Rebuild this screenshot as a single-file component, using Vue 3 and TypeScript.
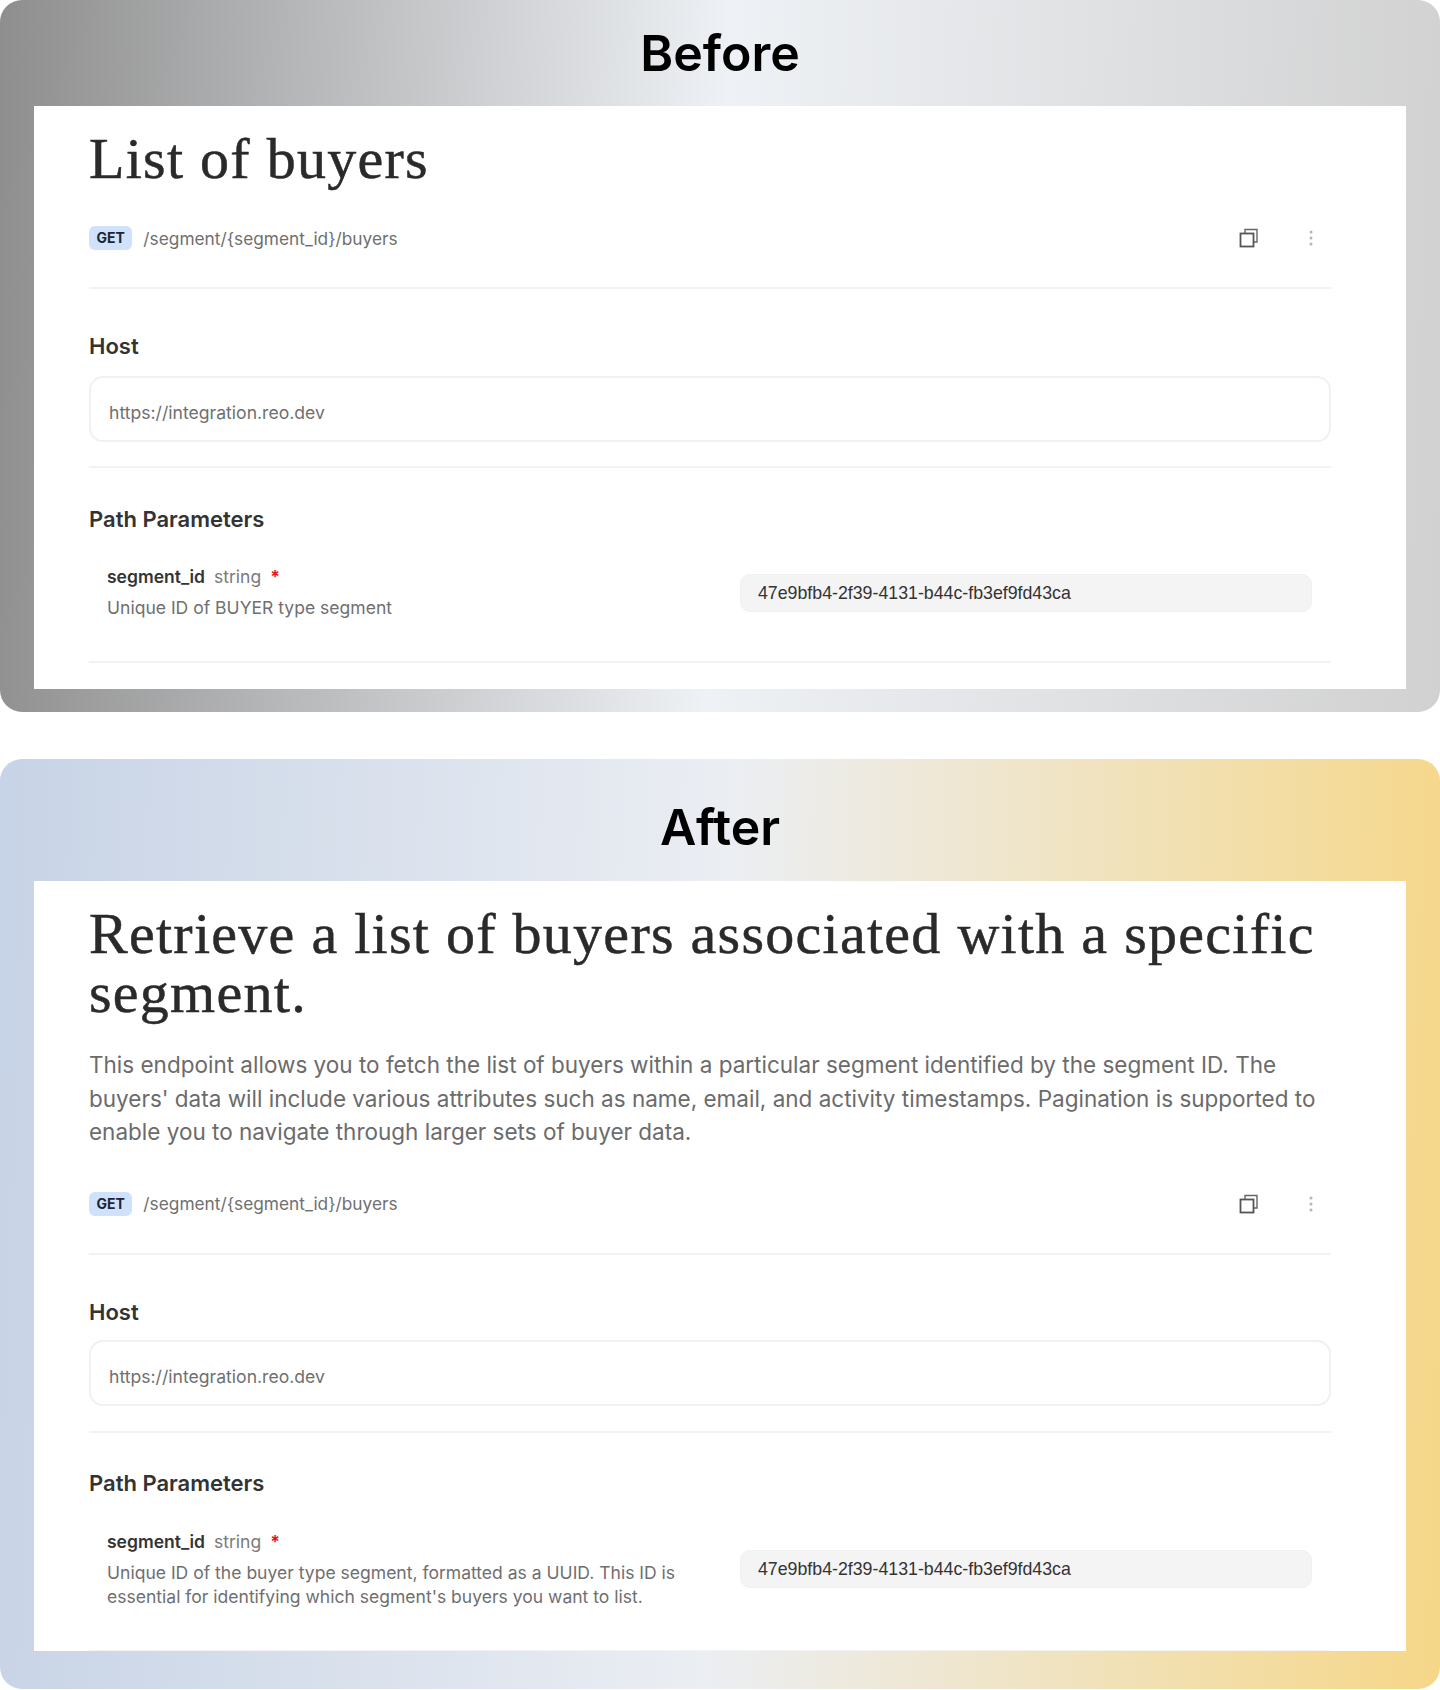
<script setup lang="ts">
interface Panel {
  label: string;
  kind: string;
  title: string;
  intro?: string;
  paramDesc: string;
}

const panels: Panel[] = [
  {
    label: 'Before',
    kind: 'before',
    title: 'List of buyers',
    paramDesc: 'Unique ID of BUYER type segment'
  },
  {
    label: 'After',
    kind: 'after',
    title: 'Retrieve a list of buyers associated with a specific segment.',
    intro:
      "This endpoint allows you to fetch the list of buyers within a particular segment identified by the segment ID. The buyers' data will include various attributes such as name, email, and activity timestamps. Pagination is supported to enable you to navigate through larger sets of buyer data.",
    paramDesc:
      "Unique ID of the buyer type segment, formatted as a UUID. This ID is essential for identifying which segment's buyers you want to list."
  }
];
</script>

<template>
  <div class="page">
    <section v-for="panel in panels" :key="panel.kind" class="panel" :class="panel.kind">
      <h2 class="panel-label">{{ panel.label }}</h2>
      <div class="card">
        <h1 class="title">{{ panel.title }}</h1>
        <p v-if="panel.intro" class="intro">{{ panel.intro }}</p>

        <div class="endpoint">
          <span class="method">GET</span>
          <span class="path">/segment/{segment_id}/buyers</span>
          <svg class="copy-icon" width="20" height="20" viewBox="0 0 20 20" fill="none">
            <path d="M6 5V1.5H18V14H14.5" stroke="#666" stroke-width="1.4" />
            <rect x="1.5" y="5.5" width="13" height="13" stroke="#555" stroke-width="1.8" />
          </svg>
          <svg class="more-icon" width="4" height="16" viewBox="0 0 4 16" fill="#b4b4b4">
            <circle cx="2" cy="2" r="1.5" />
            <circle cx="2" cy="8" r="1.5" />
            <circle cx="2" cy="14" r="1.5" />
          </svg>
        </div>

        <div class="section host">
          <h3 class="section-title">Host</h3>
          <div class="host-box">https://integration.reo.dev</div>
        </div>

        <div class="section params">
          <h3 class="section-title">Path Parameters</h3>
          <div class="param-row">
            <div class="param-info">
              <div class="param-head">
                <span class="param-name">segment_id</span>
                <span class="param-type">string</span>
                <span class="param-required">*</span>
              </div>
              <p class="param-desc">{{ panel.paramDesc }}</p>
            </div>
            <div class="param-value">47e9bfb4-2f39-4131-b44c-fb3ef9fd43ca</div>
          </div>
        </div>
      </div>
    </section>
  </div>
</template>

<style>
html,
body {
  margin: 0;
  background: #fff;
}
</style>

<style scoped>
.page {
  width: 1440px;
  height: 1690px;
  display: flex;
  flex-direction: column;
  gap: 47px;
  font-family: Inter, "Liberation Sans", sans-serif;
}

.panel {
  padding: 0 34px;
  border-radius: 22px;
  overflow: hidden;
}

.panel.before {
  height: 712px;
  background: linear-gradient(92deg, #8e8e8e 0%, #eef1f5 50%, #d1d1d1 100%);
}

.panel.after {
  height: 930px;
  background: linear-gradient(92deg, #c7d3e6 0%, #ebeef3 50%, #f6d788 100%);
}

.panel-label {
  height: 106px;
  margin: 0;
  font-size: 50px;
  font-weight: 600;
  line-height: 106px;
  text-align: center;
  color: #000;
}

.after .panel-label {
  box-sizing: border-box;
  height: 122px;
  padding-top: 15px;
  line-height: 107px;
}

.card {
  box-sizing: border-box;
  background: #fff;
  padding: 23px 75px 0 55px;
  overflow: hidden;
}

.before .card {
  height: 583px;
}

.after .card {
  height: 770px;
}

.title {
  margin: 0;
  font-family: "Liberation Serif", "Times New Roman", serif;
  font-size: 58px;
  font-weight: 400;
  line-height: 59px;
  letter-spacing: 1.27px;
  -webkit-text-stroke: 0.5px #2a2a2a;
  color: #2a2a2a;
}

.intro {
  margin: 26px 0 0;
  font-size: 22.5px;
  line-height: 33.5px;
  color: #6b6b6b;
}

.endpoint {
  display: flex;
  align-items: center;
  height: 24px;
  margin-top: 38px;
  padding-bottom: 37px;
  border-bottom: 2px solid #f2f2f3;
}

.after .endpoint {
  margin-top: 43px;
}

.method {
  padding: 0 7.5px;
  height: 24px;
  line-height: 24px;
  border-radius: 6px;
  background: #d0e1fb;
  font-size: 14px;
  font-weight: 700;
  color: #1d2530;
}

.path {
  margin-left: 11px;
  font-size: 17.3px;
  color: #6f6f6f;
}

.copy-icon {
  margin-left: auto;
}

.more-icon {
  margin-left: 50px;
  margin-right: 18px;
}

.section {
  border-bottom: 2px solid #f2f2f3;
}

.section-title {
  margin: 0;
  font-size: 22px;
  font-weight: 600;
  line-height: 28px;
  color: #333;
}

.host {
  padding-top: 43px;
  padding-bottom: 24px;
}

.after .host {
  padding-bottom: 25px;
}

.host-box {
  margin-top: 16px;
  height: 66px;
  box-sizing: border-box;
  padding: 23px 18px 0;
  border: 2px solid #f1f1f2;
  border-radius: 14px;
  font-size: 17.6px;
  line-height: 24px;
  color: #6f6f6f;
}

.after .host-box {
  margin-top: 14px;
}

.params {
  padding-top: 37px;
  padding-bottom: 41px;
}

.after .params {
  padding-top: 36px;
}

.param-row {
  display: grid;
  grid-template-columns: 1fr 572px;
  gap: 40px;
  align-items: center;
  padding: 0 19px 0 18px;
  margin-top: 32px;
}

.after .param-row {
  margin-top: 33px;
}

.param-head {
  display: flex;
  align-items: baseline;
  gap: 9px;
  font-size: 17.5px;
  line-height: 24px;
}

.param-name {
  font-weight: 600;
  color: #333;
}

.param-type {
  color: #7a7a7a;
}

.param-required {
  font-weight: 700;
  color: #e8121f;
}

.param-desc {
  margin: 7px 0 0;
  font-size: 17.55px;
  line-height: 24px;
  color: #6f6f6f;
}

.param-value {
  box-sizing: border-box;
  height: 38px;
  padding: 0 17px;
  border: 1px solid #eef0f3;
  border-radius: 10px;
  background: #f4f4f5;
  font-family: "Liberation Sans", Arial, sans-serif;
  font-size: 17.75px;
  line-height: 36px;
  color: #333;
}
</style>
